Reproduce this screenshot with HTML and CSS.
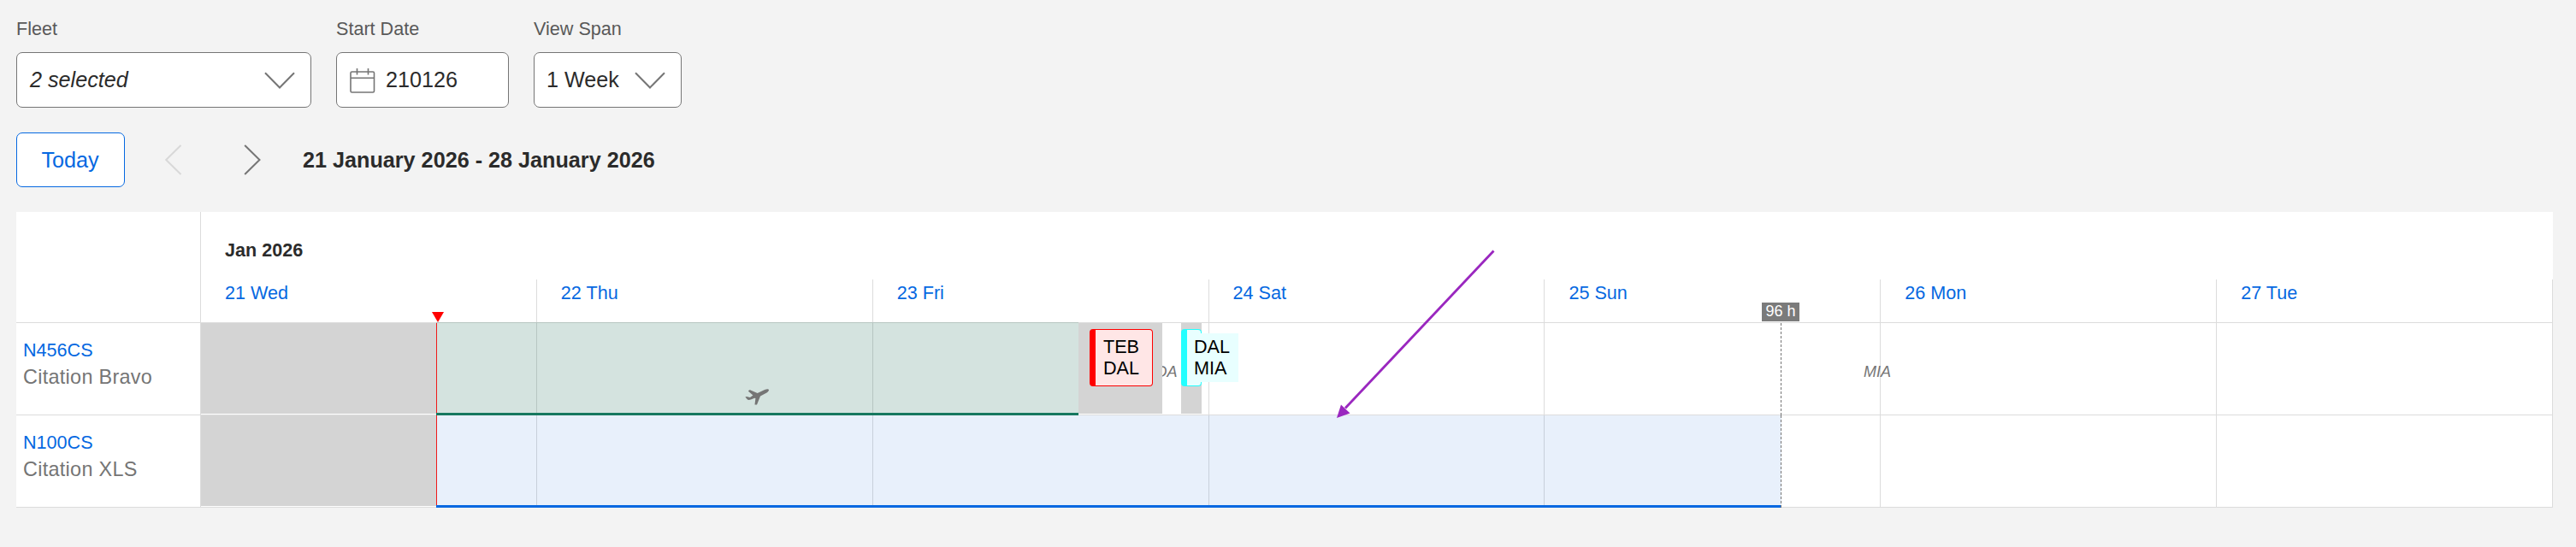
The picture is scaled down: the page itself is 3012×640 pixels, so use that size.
FILE: index.html
```html
<!DOCTYPE html>
<html lang="en">
<head>
    <meta charset="utf-8"/>
    <title>Fleet availability</title>
    <link rel="stylesheet" href="styles.css">
</head>

<body>
<div class="filters">
    <div class="field">
        <label class="field-label">Fleet</label>
        <div class="control control-fleet">
            <span class="control-text italic">2 selected</span>
            <svg class="chevron" width="36" height="20" viewBox="0 0 36 20"><path d="M1 1.2 18 18.5 35 1.2"/></svg>
        </div>
    </div>
    <div class="field">
        <label class="field-label">Start Date</label>
        <div class="control control-date">
            <svg class="calendar" width="30" height="30" viewBox="0 0 30 30">
                <rect x="1" y="5" width="27.5" height="24" rx="1.5"/>
                <path d="M1 12.3H28.5M8.5 1V8.5M21.5 1V8.5"/>
            </svg>
            <span class="control-text">210126</span>
        </div>
    </div>
    <div class="field">
        <label class="field-label">View Span</label>
        <div class="control control-span">
            <span class="control-text">1 Week</span>
            <svg class="chevron" width="36" height="20" viewBox="0 0 36 20"><path d="M1 1.2 18 18.5 35 1.2"/></svg>
        </div>
    </div>
</div>

<div class="toolbar">
    <button class="today">Today</button>
    <svg class="arrow arrow-prev" width="20" height="36" viewBox="0 0 20 36"><path d="M18.5 1 1.2 18 18.5 35"/></svg>
    <svg class="arrow arrow-next" width="20" height="36" viewBox="0 0 20 36"><path d="M1.2 1 18.5 18 1.2 35"/></svg>
    <h1 class="range">21 January 2026 - 28 January 2026</h1>
</div>

<div class="schedule">
    <div class="row schedule-head">
        <div class="side"></div>
        <div class="head-dates">
            <div class="month">Jan 2026</div>
            <div class="days">
                <div class="day">21 Wed</div>
                <div class="day">22 Thu</div>
                <div class="day">23 Fri</div>
                <div class="day">24 Sat</div>
                <div class="day">25 Sun</div>
                <div class="day">26 Mon</div>
                <div class="day">27 Tue</div>
            </div>
            <div class="now-marker"></div>
            <div class="limit-tag">96 h</div>
        </div>
    </div>

    <div class="row">
        <div class="side">
            <a class="tail">N456CS</a>
            <div class="type">Citation Bravo</div>
        </div>
        <div class="lane">
            <div class="cell"></div>
            <div class="cell"></div>
            <div class="cell"></div>
            <div class="cell"></div>
            <div class="cell"></div>
            <div class="cell"></div>
            <div class="cell"></div>
            <span class="location" style="left: 1116px; width: 26px">DA</span>
            <div class="blocked" style="left: 0; width: 275px"></div>
            <div class="available green" style="left: 275px; width: 751px">
                <svg class="plane" width="30" height="20" viewBox="0 0 30 20">
                    <path d="M28.4.4C26.5-.2 23.200 1.300 21 2.600L15.600 4.900 7.600 1.400C6.600 1 5.300 1.700 5 2.700L10.400 7.500 7 10 3 8.900 1.400 9.400 4 12.500C5.200 13.700 9 12.400 12.200 10.800L13.400 11 12.500 18.400 15 18.500 19 8.600 26.500 4.600C28.800 3.200 29.800 1 28.400.4Z"/>
                </svg>
            </div>
            <div class="blocked" style="left: 1026px; width: 98px"></div>
            <div class="blocked" style="left: 1146px; width: 24px"></div>
            <div class="flight flight-red" style="left: 1039px; width: 74px">
                <div class="flight-text">TEB<br/>DAL</div>
            </div>
            <div class="flight flight-cyan" style="left: 1146px; width: 24px">
                <div class="flight-text">DAL<br/>MIA</div>
            </div>
            <span class="location" style="left: 1170px; width: 1580px">MIA</span>
            <div class="now-line"></div>
            <div class="limit-line"></div>
        </div>
    </div>

    <div class="row">
        <div class="side">
            <a class="tail">N100CS</a>
            <div class="type">Citation XLS</div>
        </div>
        <div class="lane">
            <div class="cell"></div>
            <div class="cell"></div>
            <div class="cell"></div>
            <div class="cell"></div>
            <div class="cell"></div>
            <div class="cell"></div>
            <div class="cell"></div>
            <div class="blocked" style="left: 0; width: 275px"></div>
            <div class="available blue" style="left: 275px; width: 1573px"></div>
            <div class="now-line"></div>
            <div class="limit-line"></div>
        </div>
    </div>

    <!-- annotation -->
    <svg class="pointer" width="190" height="202" viewBox="0 0 190 202">
        <path class="pointer-line" d="M186.500 5.500 13 189.500"/>
        <path class="pointer-head" d="M3 201 8 185.500 18.500 195.500Z"/>
    </svg>
</div>
</body>
</html>
```
FILE: styles.css
```css
* {
    box-sizing: border-box;
    margin: 0;
    padding: 0;
}

body {
    background: #f3f3f3;
    color: #2b2b2b;
    font-family: "Liberation Sans", Arial, sans-serif;
    font-size: 25.2px;
    padding: 19px 27px 0 19px;
}

svg {
    display: block;
    fill: none;
    flex: none;
}

/* filters */
.filters {
    display: flex;
    gap: 29px;
}

.field-label {
    display: block;
    height: 42px;
    line-height: 30px;
    font-size: 21.6px;
    color: #595959;
}

.control {
    display: flex;
    align-items: center;
    height: 65px;
    padding: 0 18px 0 15px;
    background: #fff;
    border: 1px solid #757575;
    border-radius: 7px;
}

.control-fleet {
    width: 345px;
    justify-content: space-between;
}

.control-date {
    width: 202px;
    gap: 12px;
}

.control-span {
    width: 173px;
    padding-left: 14px;
    justify-content: space-between;
}

.italic {
    font-style: italic;
}

.chevron, .arrow, .calendar {
    stroke: #757575;
    stroke-width: 2;
}

.calendar {
    stroke-width: 1.6;
}

/* toolbar */
.toolbar {
    display: flex;
    align-items: center;
    height: 64px;
    margin-top: 29px;
}

.today {
    width: 127px;
    height: 64px;
    padding-right: 1px;
    background: #fff;
    border: 1px solid #0568e1;
    border-radius: 7px;
    color: #0568e1;
    font: inherit;
}

.arrow-prev {
    margin-left: 47px;
    stroke: #d8d8d8;
}

.arrow-next {
    margin-left: 72px;
}

.range {
    margin-left: 49px;
    font-size: 25.2px;
    font-weight: bold;
}

/* schedule */
.schedule {
    position: relative;
    margin-top: 29px;
    background: #fff;
}

.row {
    display: flex;
    height: 108px;
    border-bottom: 1px solid #dcdcdc;
}

.schedule-head {
    height: 130px;
}

.side {
    flex: none;
    width: 216px;
    padding: 17px 8px;
    border-right: 1px solid #dcdcdc;
}

.tail {
    display: block;
    line-height: 29px;
    font-size: 21.6px;
    color: #0568e1;
}

.type {
    line-height: 35px;
    font-size: 23.4px;
    letter-spacing: .3px;
    color: #757575;
}

.head-dates {
    position: relative;
    flex: 1;
}

.month {
    height: 79px;
    padding: 32px 0 0 28px;
    line-height: 26px;
    font-size: 21.6px;
    font-weight: bold;
}

.days, .lane {
    display: flex;
}

.day, .cell {
    flex: 1;
    border-right: 1px solid #dcdcdc;
}

.day {
    height: 50px;
    padding-left: 28px;
    line-height: 32px;
    font-size: 21.6px;
    color: #0568e1;
}

.lane {
    position: relative;
    flex: 1;
}

.now-marker {
    position: absolute;
    left: 270px;
    bottom: 0;
    border: 7px solid transparent;
    border-top: 12px solid #f00;
    border-bottom: 0;
}

.limit-tag {
    position: absolute;
    left: 1825px;
    bottom: 1px;
    width: 44px;
    height: 22px;
    background: #7b7b7b;
    color: #fff;
    font-size: 18px;
    line-height: 21px;
    text-align: center;
}

.now-line {
    position: absolute;
    left: 275px;
    top: 0;
    bottom: 2px;
    width: 1px;
    background: #ef1a1a;
}

.limit-line {
    position: absolute;
    left: 1847px;
    top: 0;
    bottom: -1px;
    width: 1px;
    background: repeating-linear-gradient(#757575 0 3px, transparent 3px 5px);
}

.blocked {
    position: absolute;
    top: 0;
    bottom: 1px;
    background: #d4d4d4;
}

.available {
    position: absolute;
    top: -1px;
    bottom: -1px;
    border-bottom: 3px solid;
}

.green {
    background: rgba(14, 99, 77, .18);
    background-clip: padding-box;
    border-color: #16785f;
}

.blue {
    top: 0;
    background: rgba(0, 85, 215, .09);
    background-clip: padding-box;
    border-color: #0568e1;
}

.plane {
    position: absolute;
    left: 360px;
    bottom: 8px;
    fill: #757575;
}

.location {
    position: absolute;
    top: 46px;
    line-height: 22px;
    font-size: 18px;
    font-style: italic;
    text-align: center;
    color: #757575;
}

.flight {
    position: absolute;
    top: 7px;
    height: 67px;
    padding-top: 4px;
    border: 1px solid;
    border-left-width: 7px;
    border-radius: 4px;
}

.flight-text {
    width: 52px;
    height: 57px;
    padding: 3px 0 0 9px;
    color: #000;
    font-size: 21.6px;
    line-height: 25px;
}

.flight-red {
    background: #ffe6e6;
    border-color: #f00;
}

.flight-cyan {
    background: #e8ffff;
    border-color: #2ff;
}

.flight-cyan .flight-text {
    margin-left: 8px;
    padding-left: 0;
    background: #e8ffff;
}

.pointer {
    position: absolute;
    left: 1541px;
    top: 40px;
}

.pointer-line {
    stroke: #9a27bf;
    stroke-width: 2.8;
}

.pointer-head {
    fill: #9a27bf;
}
```
